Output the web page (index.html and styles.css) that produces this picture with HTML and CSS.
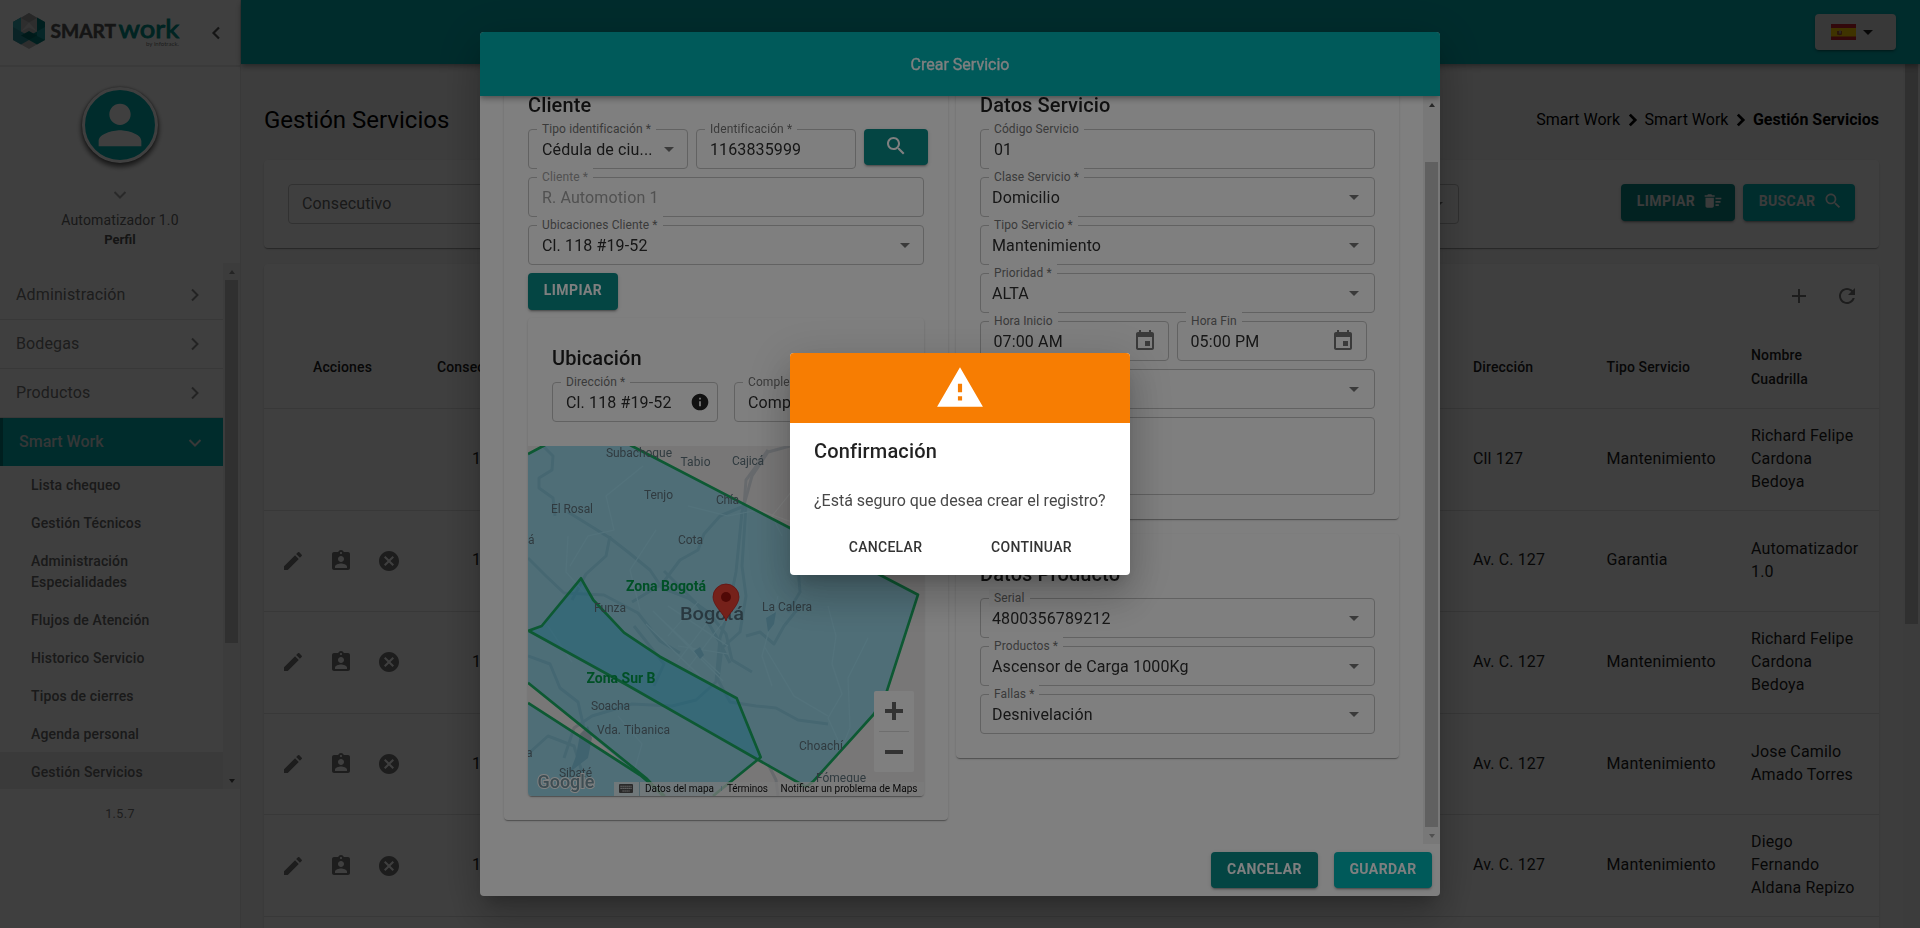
FILE: index.html
```html
<!DOCTYPE html>
<html lang="es">
<head>
<meta charset="utf-8">
<title>Smart Work - Gestión Servicios</title>
<link rel="stylesheet" href="styles.css">
</head>
<body>
<svg class="defs" aria-hidden="true">
  <symbol id="search" viewBox="0 0 24 24"><path d="M15.5 14h-.79l-.28-.27C15.41 12.59 16 11.11 16 9.5 16 5.91 13.09 3 9.5 3S3 5.91 3 9.5 5.91 16 9.5 16c1.61 0 3.09-.59 4.23-1.57l.27.28v.79l5 4.99L20.49 19l-4.99-5zm-6 0C7.01 14 5 11.99 5 9.5S7.01 5 9.5 5 14 7.01 14 9.5 11.99 14 9.5 14z"/></symbol>
  <symbol id="edit" viewBox="0 0 24 24"><path d="M3 17.25V21h3.75L17.81 9.94l-3.75-3.75L3 17.25zM20.71 7.04c.39-.39.39-1.02 0-1.41l-2.34-2.34c-.39-.39-1.02-.39-1.41 0l-1.83 1.83 3.75 3.75 1.83-1.83z"/></symbol>
  <symbol id="assign" viewBox="0 0 24 24"><path d="M19 3h-4.18C14.4 1.84 13.3 1 12 1c-1.3 0-2.4.84-2.82 2H5c-1.1 0-2 .9-2 2v14c0 1.1.9 2 2 2h14c1.1 0 2-.9 2-2V5c0-1.1-.9-2-2-2zm-7 0c.55 0 1 .45 1 1s-.45 1-1 1-1-.45-1-1 .45-1 1-1zm0 4c1.66 0 3 1.34 3 3s-1.34 3-3 3-3-1.34-3-3 1.34-3 3-3zm6 12H6v-1.4c0-2 4-3.1 6-3.1s6 1.1 6 3.1V19z"/></symbol>
  <symbol id="cancel" viewBox="0 0 24 24"><path d="M12 2C6.47 2 2 6.47 2 12s4.47 10 10 10 10-4.47 10-10S17.53 2 12 2zm5 13.59L15.59 17 12 13.41 8.41 17 7 15.59 10.59 12 7 8.41 8.41 7 12 10.59 15.59 7 17 8.41 13.41 12 17 15.59z"/></symbol>
  <symbol id="caret" viewBox="0 0 24 24"><path d="M7 10l5 5 5-5z"/></symbol>
  <symbol id="event" viewBox="0 0 24 24"><path d="M17 12h-5v5h5v-5zM16 1v2H8V1H6v2H5c-1.11 0-1.99.9-1.99 2L3 19c0 1.1.89 2 2 2h14c1.1 0 2-.9 2-2V5c0-1.1-.9-2-2-2h-1V1h-2zm3 18H5V8h14v11z"/></symbol>
  <symbol id="right" viewBox="0 0 24 24"><path d="M9 6.500l5.500 5.500-5.500 5.500" fill="none" stroke="currentColor"/></symbol>
  <symbol id="down" viewBox="0 0 24 24"><path d="M6.500 9l5.500 5.500 5.500-5.500" fill="none" stroke="currentColor"/></symbol>
</svg>

<div class="app">
  <aside class="sidebar">
    <div class="brand">
      <svg class="logo" viewBox="0 0 180 40">
        <g transform="translate(13 3)">
          <path d="M16 0l16 9v18l-16 9L0 27V9z" fill="#b9b9bb"/>
          <path d="M0 9l8-4.500v14l8 4.500v4l-8 4.500L0 27z" fill="#2b8f98"/>
          <path d="M0 9l8-4.500v14L0 14z" fill="#35a9b2"/>
          <path d="M32 9l-8-4.500v14L16 23v4l8 4.500 8-4.500z" fill="#007f7c"/>
          <path d="M24 18.500l8-4.500v13l-8-4z" fill="#1b9aa0"/>
          <path d="M8 5l8 4.500L24 5l-8-5z" fill="#9c9c9e"/>
          <path d="M8 18.500l8-9 8 9-8-4z" fill="#d0d0d2"/>
          <path d="M8 22.500l8-4.500 8 4.500-8 4.500z" fill="#006b69"/>
        </g>
        <text class="logo-a" x="50.500" y="28" textLength="65.500" lengthAdjust="spacingAndGlyphs">SMART</text>
        <text class="logo-b" x="118.500" y="28" textLength="60.500" lengthAdjust="spacingAndGlyphs">work</text>
        <text class="logo-c" x="146" y="35.500" textLength="33" lengthAdjust="spacingAndGlyphs">by infotrack.</text>
      </svg>
      <svg class="brand-arrow" viewBox="0 0 24 24"><path d="M15 6.500L9.500 12l5.500 5.500" fill="none" stroke="currentColor" stroke-width="2.200"/></svg>
    </div>
    <div class="profile">
      <div class="avatar"><svg viewBox="0 0 24 24"><path d="M12 12c2.210 0 4-1.790 4-4s-1.790-4-4-4-4 1.790-4 4 1.790 4 4 4zm0 2c-2.670 0-8 1.340-8 4v2h16v-2c0-2.660-5.330-4-8-4z"/></svg></div>
      <svg class="profile-arrow"><use href="#down"/></svg>
      <div class="profile-name">Automatizador 1.0</div>
      <div class="profile-role">Perfil</div>
    </div>
    <div class="menu">
      <nav class="menu-list">
        <div class="item">Administración<svg><use href="#right"/></svg></div>
        <div class="item">Bodegas<svg><use href="#right"/></svg></div>
        <div class="item">Productos<svg><use href="#right"/></svg></div>
        <div class="item open">Smart Work<svg><use href="#down"/></svg></div>
        <div class="sub">Lista chequeo</div>
        <div class="sub">Gestión Técnicos</div>
        <div class="sub">Administración Especialidades</div>
        <div class="sub">Flujos de Atención</div>
        <div class="sub">Historico Servicio</div>
        <div class="sub">Tipos de cierres</div>
        <div class="sub">Agenda personal</div>
        <div class="sub current">Gestión Servicios</div>
      </nav>
      <div class="bar"><i class="up off"></i><div class="thumb menu-thumb"></div><i class="dn"></i></div>
    </div>
    <div class="version">1.5.7</div>
  </aside>

  <div class="main">
    <header class="topbar">
      <div class="lang">
        <svg class="flag" viewBox="0 0 25 16"><path fill="#c8202c" d="M0 0h25v16H0z"/><path fill="#fc0" d="M0 4h25v8.500H0z"/><path fill="#ad5a2c" d="M6 7h5v3.500q-2.500 1.500-5 0z"/><path fill="#b9a08f" d="M8 6.500h2v3H8z"/></svg>
        <svg class="lang-caret"><use href="#caret"/></svg>
      </div>
    </header>
    <div class="scroll">
      <div class="page">
        <div class="page-head">
          <h1>Gestión Servicios</h1>
          <div class="crumbs"><span>Smart Work</span><svg><use href="#right"/></svg><span>Smart Work</span><svg><use href="#right"/></svg><b>Gestión Servicios</b></div>
        </div>
        <section class="card filters">
          <div class="filter-field">Consecutivo</div>
          <div class="filter-select"><svg class="ic"><use href="#caret"/></svg></div>
          <div class="actions">
            <button class="btn dark f-clear">LIMPIAR<svg viewBox="0 0 24 24"><path d="M15 16h4v2h-4zm0-8h7v2h-7zm0 4h6v2h-6zM3 18c0 1.100.900 2 2 2h6c1.100 0 2-.900 2-2V8H3v10zM14 5h-3l-1-1H6L5 5H2v2h12z"/></svg></button>
            <button class="btn teal f-find">BUSCAR<svg><use href="#search"/></svg></button>
          </div>
        </section>
        <section class="card grid-card">
          <div class="tools">
            <svg viewBox="0 0 24 24"><path d="M19 13h-6v6h-2v-6H5v-2h6V5h2v6h6v2z"/></svg>
            <svg viewBox="0 0 24 24"><path d="M17.650 6.350C16.200 4.900 14.210 4 12 4c-4.420 0-7.990 3.580-7.990 8s3.570 8 7.990 8c3.730 0 6.840-2.550 7.730-6h-2.080c-.820 2.330-3.040 4-5.650 4-3.310 0-6-2.690-6-6s2.690-6 6-6c1.660 0 3.140.690 4.220 1.780L13 11h7V4l-2.350 2.350z"/></svg>
          </div>
          <div class="row head"><div>Acciones</div><div>Consecutivo</div><div>Dirección</div><div>Tipo Servicio</div><div>Nombre<br>Cuadrilla</div></div>
          <div class="row"><div></div><div>1</div><div>Cll 127</div><div>Mantenimiento</div><div>Richard Felipe Cardona Bedoya</div></div>
          <div class="row"><div class="icons"><svg><use href="#edit"/></svg><svg><use href="#assign"/></svg><svg><use href="#cancel"/></svg></div><div>1</div><div>Av. C. 127</div><div>Garantia</div><div>Automatizador 1.0</div></div>
          <div class="row"><div class="icons"><svg><use href="#edit"/></svg><svg><use href="#assign"/></svg><svg><use href="#cancel"/></svg></div><div>1</div><div>Av. C. 127</div><div>Mantenimiento</div><div>Richard Felipe Cardona Bedoya</div></div>
          <div class="row"><div class="icons"><svg><use href="#edit"/></svg><svg><use href="#assign"/></svg><svg><use href="#cancel"/></svg></div><div>1</div><div>Av. C. 127</div><div>Mantenimiento</div><div>Jose Camilo Amado Torres</div></div>
          <div class="row"><div class="icons"><svg><use href="#edit"/></svg><svg><use href="#assign"/></svg><svg><use href="#cancel"/></svg></div><div>1</div><div>Av. C. 127</div><div>Mantenimiento</div><div>Diego Fernando Aldana Repizo</div></div>
          <div class="row"></div>
        </section>
      </div>
      <div class="bar page-bar"><div class="thumb page-thumb"></div></div>
    </div>
  </div>
</div>

<div class="backdrop">
  <div class="dialog">
    <div class="dialog-title">Crear Servicio</div>
    <div class="dialog-body">
      <div class="columns">
        <section class="card col-left">
          <h2>Cliente</h2>
          <div class="line">
            <div class="field w160"><label>Tipo identificación *</label><span>Cédula de ciu...</span><svg class="ic"><use href="#caret"/></svg></div>
            <div class="field w160"><label>Identificación *</label><span>1163835999</span></div>
            <button class="btn dark b-find"><svg><use href="#search"/></svg></button>
          </div>
          <div class="field disabled"><label>Cliente *</label><span>R. Automotion 1</span></div>
          <div class="field"><label>Ubicaciones Cliente *</label><span>Cl. 118 #19-52</span><svg class="ic"><use href="#caret"/></svg></div>
          <button class="btn dark b-clear">LIMPIAR</button>
          <div class="card place">
            <div class="place-form">
              <h2>Ubicación</h2>
              <div class="line wide">
                <div class="field w166"><label>Dirección *</label><span>Cl. 118 #19-52</span><svg class="info" viewBox="0 0 24 24"><path d="M12 2C6.480 2 2 6.480 2 12s4.480 10 10 10 10-4.480 10-10S17.520 2 12 2zm1 15h-2v-6h2v6zm0-8h-2V7h2v2z"/></svg></div>
                <div class="field w166"><label>Complemento</label><span>Complemento</span></div>
              </div>
            </div>
            <svg class="map" viewBox="0 0 396 350">
              <rect width="396" height="350" fill="#f1efef"/>
              <g fill="none" stroke="#cfd4da" stroke-width="3" stroke-linejoin="round">
                <path d="M15 0l10 10-1 14-13 8 0 10 14 10 2 18"/>
                <path d="M40 66l42 26 18 14 22 18 12 18 26 10 20 14 18 22 6 26 20 12"/>
                <path d="M0 112l18 18 18 17 40 2 34 18 22 28 20 12"/>
                <path d="M82 90l-4 20-20 18-14 26"/>
                <path d="M262 0l-22 6-16 24-10 36-6 60-8 40-8 26-4 44-20 18-24 6-40-2-40 12-18 12-10 30"/>
                <path d="M240 4l-22 30-2 26-24 10-16 18-6 16-18 10-18 24-30 18"/>
                <path d="M218 60l-4 60 4 30-6 36-18 16-4 32 12 22 26 4 20 2 22 12 30 4"/>
                <path d="M136 125l34 34 22 38 10 20M106 180l30 38-10 22"/>
                <path d="M218 190l14-4 14 12 10-18 16-20M270 120l2 26-12 20"/>
                <path d="M0 210l22 8 10 24 18 14 6 26M0 308l20-18 26 10 8 26M250 350l-2-16-8-16"/>
              </g>
              <g fill="none" stroke="#fdfdfd" stroke-width="1.100">
                <path d="M115 20L78 50 86 84 60 90 42 120M40 90l-2 36 18 20M128 84l-26 40 10 40M160 60l40 10 30-6 34 12M300 160l8 30-4 28 10 30-14 24 10 22M340 192l-20 40 2 50-12 30M268 40l-24 30 10 20M125 165l70 70M118 178l60 58M132 172l60 56M140 160l60 40M140 190l30-34M150 200l50 8M150 215l38-50M160 222l38-50M236 200l30 50 34 20M90 270l24 28-8 28M20 180l24 36M250 150l-16 60 10 30"/>
              </g>
              <path d="M52 288l8-8 4 12-4 20-18 14 6-16zM238 172l10-6-2 12-6 8zM166 205l6-4 4 8-4 4z" fill="#b9c6d1"/>
              <path d="M0 8L17-1h85l160 83 128 66.700-31.300 97L346 268l-61 67.700L278 341l-49.300-28L99 239 1 185H0z" fill="#36c7ef" fill-opacity=".44"/>
              <path d="M0 185l13.700-5L53 132.300 65.300 154 96 186.700l36 24 76.700 41.600 24 59L185 350h-50L0 236.700z" fill="#36c7ef" fill-opacity=".46"/>
              <path d="M0 257l110 72 25 21H0z" fill="#36c7ef" fill-opacity=".44"/>
              <g fill="none" stroke="#1bb266" stroke-width="2.700" stroke-linejoin="round">
                <path d="M0 8L17-1M102-1l160 83 128 66.700-31.300 97L346 268l-61 67.700L278 341l-49.300-28L99 239 1 185"/>
                <path d="M0 185l13.700-5L53 132.300 65.300 154 96 186.700l36 24 76.700 41.600 24 59L185 350M135 350L118 332 0 236.700"/>
                <path d="M0 257l112 72 25 21"/>
              </g>
              <g class="places">
                <text x="78" y="10.700" textLength="66">Subachoque</text><text x="152.500" y="20" textLength="30">Tabio</text><text x="204" y="19" textLength="32">Cajicá</text>
                <text x="116" y="53" textLength="29">Tenjo</text><text x="188" y="58" textLength="23">Chía</text><text x="23" y="67" textLength="42">El Rosal</text>
                <text x="0" y="98">á</text><text x="150" y="98" textLength="25">Cota</text><text x="66" y="166" textLength="32">Funza</text><text x="234" y="165" textLength="50">La Calera</text>
                <text x="63" y="264" textLength="39">Soacha</text><text x="69" y="288" textLength="73">Vda. Tibanica</text><text x="271" y="304" textLength="44">Choachí</text>
                <text x="31" y="331" textLength="33">Sibaté</text><text x="288" y="336" textLength="50">Fómeque</text><text x="-2" y="311">a</text>
              </g>
              <text class="city" x="152" y="174" textLength="64" lengthAdjust="spacingAndGlyphs">Bogotá</text>
              <text class="zone" x="98" y="145" textLength="80">Zona Bogotá</text>
              <text class="zone" x="58.500" y="237" textLength="69">Zona Sur B</text>
              <path d="M198 175c-1.500-7-13-15-13-24a13 13 0 0 1 26 0c0 9-11.500 17-13 24z" fill="#ea4335" stroke="#c5221f" stroke-width=".8"/>
              <circle cx="198" cy="151" r="5" fill="#a0120c"/>
              <text class="google" x="9.500" y="342" textLength="57" lengthAdjust="spacingAndGlyphs">Google</text>
              <path d="M86 336h310v14H86z" fill="#f5f5f5" fill-opacity=".75"/>
              <path d="M111.500 336v14M193.500 340v5" stroke="#8fc4d4" stroke-width=".8"/>
              <rect x="91" y="338" width="14" height="9" rx="1" fill="#555"/>
              <path d="M92.500 340.200h11M92.500 342.400h11M94.500 345h7" stroke="#eee" stroke-width="1.100" stroke-dasharray="1.200 .8"/>
              <g class="legal"><text x="117" y="346" textLength="69">Datos del mapa</text><text x="199" y="346" textLength="41">Términos</text><text x="252.500" y="346" textLength="137">Notificar un problema de Maps</text></g>
              <rect x="346" y="245" width="40" height="81" rx="2" fill="#fff"/>
              <path d="M351 285.500h30" stroke="#ddd" stroke-width="1"/>
              <path d="M357 265h18M366 256v18M357 306h18" stroke="#666" stroke-width="4"/>
            </svg>
          </div>
        </section>
        <div class="col-right">
          <section class="card service">
            <h2>Datos Servicio</h2>
            <div class="field"><label>Código Servicio</label><span>01</span></div>
            <div class="field auto"><label>Clase Servicio *</label><span>Domicilio</span><svg class="ic"><use href="#caret"/></svg></div>
            <div class="field auto"><label>Tipo Servicio *</label><span>Mantenimiento</span><svg class="ic"><use href="#caret"/></svg></div>
            <div class="field auto"><label>Prioridad *</label><span>ALTA</span><svg class="ic"><use href="#caret"/></svg></div>
            <div class="line">
              <div class="field w189"><label>Hora Inicio</label><span>07:00 AM</span><svg class="cal"><use href="#event"/></svg></div>
              <div class="field w190"><label>Hora Fin</label><span>05:00 PM</span><svg class="cal"><use href="#event"/></svg></div>
            </div>
            <div class="field auto"><span></span><svg class="ic"><use href="#caret"/></svg></div>
            <div class="field area"></div>
          </section>
          <section class="card product">
            <h2>Datos Producto</h2>
            <div class="field auto"><label>Serial</label><span>4800356789212</span><svg class="ic"><use href="#caret"/></svg></div>
            <div class="field auto"><label>Productos *</label><span>Ascensor de Carga 1000Kg</span><svg class="ic"><use href="#caret"/></svg></div>
            <div class="field auto"><label>Fallas *</label><span>Desnivelación</span><svg class="ic"><use href="#caret"/></svg></div>
          </section>
        </div>
      </div>
      <div class="bar"><i class="up"></i><div class="thumb dialog-thumb"></div><i class="dn off"></i></div>
    </div>
    <div class="dialog-actions">
      <button class="btn dark b-cancel">CANCELAR</button>
      <button class="btn teal b-save">GUARDAR</button>
    </div>
  </div>
</div>

<div class="backdrop">
  <div class="confirm">
    <div class="confirm-top"><svg viewBox="0 0 24 24"><path d="M1 21h22L12 2 1 21zm12-3h-2v-2h2v2zm0-4h-2v-4h2v4z"/></svg></div>
    <h2>Confirmación</h2>
    <p>¿Está seguro que desea crear el registro?</p>
    <div class="confirm-actions"><button>CANCELAR</button><button>CONTINUAR</button></div>
  </div>
</div>
</body>
</html>
```

FILE: styles.css
```css
* { box-sizing: border-box; }
body { margin: 0; height: 928px; overflow: hidden; font: 16px/1.43 Roboto, "Liberation Sans", sans-serif; letter-spacing: .13px; color: rgba(0,0,0,.87); }
h1, h2, p { margin: 0; }
svg { display: block; fill: currentColor; flex: none; stroke-width: 2; }
button { border: 0; background: none; padding: 0; margin: 0; font-family: inherit; }
.defs { position: absolute; width: 0; height: 0; }
.app { display: flex; height: 928px; }

/* sidebar */
.sidebar { width: 241px; flex: none; background: #fff; border-right: 1px solid #e6e6e6; display: flex; flex-direction: column; }
.brand { height: 67px; border-bottom: 2px solid #eaeaea; display: flex; align-items: center; }
.logo { width: 180px; height: 40px; margin-top: -5px; }
.logo-a { font: 700 18.5px Lato, sans-serif; fill: #555; stroke: #555; stroke-width: .5px; letter-spacing: 0; }
.logo-b { font: 400 25px Lato, sans-serif; fill: #009089; stroke: #009089; stroke-width: .9px; letter-spacing: 0; }
.logo-c { font: 6.5px Lato, sans-serif; fill: #777; letter-spacing: 0; }
.brand-arrow { width: 24px; height: 24px; margin-left: 24px; color: #555; }
.profile { height: 196px; display: flex; flex-direction: column; align-items: center; padding-top: 20px; color: #666; }
.avatar { width: 76px; height: 76px; border: 3px solid #fff; border-radius: 50%; background: #00b3b3; color: #fff; box-shadow: 0 3px 5px 1px rgba(0,0,0,.6), 0 0 2px rgba(0,0,0,.4); display: grid; place-items: center; flex: none; }
.avatar svg { width: 64px; height: 64px; }
.profile-arrow { width: 24px; height: 24px; margin-top: 20px; color: #a5a5a5; }
.profile-name { font-size: 14px; line-height: 20px; margin-top: 3px; letter-spacing: .13px; }
.profile-role { font-size: 13px; line-height: 18px; font-weight: 700; color: #555; margin-top: 1px; letter-spacing: 0; }
.menu { height: 526px; display: flex; flex: none; overflow: hidden; }
.menu-list { width: 223px; padding-top: 8px; }
.item { height: 49px; border-bottom: 1px solid #e0e0e0; padding: 1px 16px 0; display: flex; align-items: center; justify-content: space-between; color: #757575; }
.item svg { width: 24px; height: 24px; color: #8d8d8d; margin-top: -1px; }
.item.open { height: 48px; border: 0; border-left: 3px solid #007c7c; background: #00b1b2; color: #d5dcdc; font-weight: 500; margin-bottom: 1px; letter-spacing: 0; }
.item.open svg { color: #e0e0e0; margin-top: 0; }
.sub { padding: 7.5px 60px 9.5px 31px; font-size: 14px; line-height: 21px; font-weight: 500; color: #686868; letter-spacing: .15px; }
.sub.current { background: #eaeaea; padding-bottom: 16px; margin-top: -2px; padding-top: 10px; }
.version { text-align: center; font-size: 12.5px; color: #777; margin-top: 16px; letter-spacing: .4px; }

/* scrollbars */
.bar { width: 17px; flex: none; background: #f1f1f1; display: flex; flex-direction: column; align-items: center; margin-left: auto; }
.bar i { width: 17px; height: 17px; flex: none; display: grid; place-items: center; }
.bar i::before { content: ""; border: 3.5px solid transparent; }
.bar .up::before { border-bottom: 4px solid #505050; border-top: 0; }
.bar .dn { margin-top: auto; }
.bar .dn::before { border-top: 4px solid #505050; border-bottom: 0; }
.bar .up.off::before { border-bottom-color: #909090; }
.bar .dn.off::before { border-top-color: #a0a0a0; }
.thumb { width: 13px; background: #c1c1c1; flex: none; }
.menu-thumb { height: 363px; }
.page-thumb { height: 560px; }
.dialog-thumb { height: 665px; margin-top: 49px; }

/* page */
.main { flex: 1; min-width: 0; background: #f7f7f7; display: flex; flex-direction: column; }
.topbar { height: 64px; flex: none; background: #00b1b2; box-shadow: 0 2px 4px -1px rgba(0,0,0,.2), 0 4px 5px rgba(0,0,0,.14), 0 1px 10px rgba(0,0,0,.12); position: relative; display: flex; justify-content: flex-end; padding: 14px 24px; }
.lang { width: 81px; height: 36px; border-radius: 4px; background: #e3e3e3; box-shadow: 0 3px 1px -2px rgba(0,0,0,.2), 0 2px 2px rgba(0,0,0,.14), 0 1px 5px rgba(0,0,0,.12); display: flex; align-items: center; padding-left: 16px; }
.flag { width: 25px; height: 16px; }
.lang-caret { width: 24px; height: 24px; }
.scroll { flex: 1; display: flex; min-height: 0; overflow: hidden; }
.page { width: 1662px; padding: 0 24px 0 23px; flex: none; }
.page-bar { background: #f1f1f1; }
.page-head { height: 96px; display: flex; justify-content: space-between; align-items: center; padding-top: 15px; color: #000; }
h1 { font-size: 24px; font-weight: 400; letter-spacing: 0; line-height: 32px; }
.crumbs { display: flex; align-items: center; letter-spacing: 0; padding-top: 1px; }
.crumbs svg { width: 24.5px; height: 24px; stroke-width: 2.8; margin-top: -1px; padding-left: 1px; }
.crumbs b { font-weight: 700; }
.card { background: #fff; border-radius: 4px; min-width: 0; box-shadow: 0 2px 1px -1px rgba(0,0,0,.2), 0 1px 1px rgba(0,0,0,.14), 0 1px 3px rgba(0,0,0,.12); }
.filters { height: 88px; padding: 24px; display: flex; }
.filter-field, .filter-select { height: 40px; border: 1px solid #c4c4c4; border-radius: 4px; padding: 0 13px; line-height: 38px; color: #666; }
.filter-field { width: 380px; }
.filter-select { width: 380px; margin-left: 411px; display: flex; align-items: center; justify-content: flex-end; padding: 0 8px; }
.actions { display: flex; gap: 8px; margin-left: auto; }
.btn { border-radius: 4px; color: #fff; font-weight: 700; font-size: 14px; line-height: 34px; letter-spacing: .4px; height: 37px; display: flex; align-items: center; justify-content: center; padding: 0 0 3px; box-shadow: 0 3px 1px -2px rgba(0,0,0,.2), 0 2px 2px rgba(0,0,0,.14), 0 1px 5px rgba(0,0,0,.12); }
.btn svg { width: 20px; height: 20px; margin-left: 8px; }
.dark { background: #088a87; }
.teal { background: #00b4b5; }
.filters .btn { color: #eee; padding-left: 4px; }
.f-clear { width: 114px; }
.f-find { width: 112px; }
.grid-card { margin-top: 16px; height: 700px; overflow: hidden; }
.tools { height: 64px; display: flex; justify-content: flex-end; gap: 24px; padding: 20px 20px; color: #757575; }
.tools svg { width: 24px; height: 24px; }
.row { display: grid; grid-template-columns: 157px 1036px 133.5px 144.5px 144px; height: 101.6px; border-bottom: 1px solid #e0e0e0; align-items: center; font-size: 16px; line-height: 22.88px; letter-spacing: .14px; color: #1c1c1c; }
.row > div { padding: 0 16px; }
.row > div:nth-child(2) { padding-left: 51px; }
.row.head { height: 81px; font-size: 14px; line-height: 24px; font-weight: 500; padding-bottom: 2px; }
.row.head > div:first-child { text-align: center; }
.row.head > div:nth-child(2) { padding-left: 16px; }
.row > .icons { display: flex; gap: 24px; padding-left: 17px; color: #757575; }
.icons svg { width: 24px; height: 24px; }

/* dialogs */
.backdrop { position: fixed; inset: 0; background: rgba(0,0,0,.5); display: flex; align-items: center; justify-content: center; }
.dialog, .confirm { background: #fff; border-radius: 4px; overflow: hidden; box-shadow: 0 11px 15px -7px rgba(0,0,0,.2), 0 24px 38px 3px rgba(0,0,0,.14), 0 9px 46px 8px rgba(0,0,0,.12); }
.dialog { width: 960px; height: 864px; display: flex; flex-direction: column; }
.dialog-title { height: 64px; flex: none; background: #00b4b5; color: #fff; text-align: center; line-height: 65px; letter-spacing: 0; -webkit-text-stroke: .3px #fff; position: relative; box-shadow: 0 2px 4px -1px rgba(0,0,0,.2), 0 4px 5px rgba(0,0,0,.14), 0 1px 10px rgba(0,0,0,.12); }
.dialog-body { height: 748px; flex: none; display: flex; overflow: hidden; }
.columns { display: grid; grid-template-columns: 444px 443px; gap: 8px; margin-left: 24px; align-items: start; margin-top: -31px; height: 780px; }
.col-left { padding: 24px 24px; height: 755px; }
.col-right { display: flex; flex-direction: column; gap: 15px; }
.service { padding: 24px; height: 454px; }
.product { padding: 24px; height: 224px; }
h2 { font-size: 20px; line-height: 32px; font-weight: 500; letter-spacing: .12px; margin-bottom: 8px; }
.field { position: relative; height: 40px; border: 1px solid #c4c4c4; border-radius: 4px; display: flex; align-items: center; justify-content: space-between; padding: 0 6px 0 13px; margin-bottom: 8px; color: #2e2e2e; flex: none; }
.field span { padding-top: 2px; white-space: nowrap; }
.field label { position: absolute; left: 8px; top: -10px; padding: 0 5px; background: #fff; font-size: 12px; line-height: 18px; color: #757575; letter-spacing: .1px; white-space: nowrap; }
.field.auto { padding-left: 11px; }
.auto .ic { margin-right: 2px; }
.field.disabled { color: #a2a2a2; }
.disabled label { color: #a2a2a2; }
.ic { width: 24px; height: 24px; color: #757575; }
.cal { width: 24px; height: 24px; margin-right: 5px; color: #757575; }
.info { width: 20px; height: 20px; color: #222; margin-right: 1px; }
.line { display: flex; gap: 8px; }
.line.wide { gap: 16px; }
.w160 { width: 160px; } .w166 { width: 166px; } .w189 { width: 189px; } .w190 { width: 190px; }
.w189, .w190 { padding-left: 12.5px; }
.field.area { height: 78px; margin: 0; }
.b-find { width: 64px; height: 36px; flex: none; }
.b-find svg { width: 24px; height: 24px; margin: 0 0 0 -1px; }
.b-clear { width: 90px; margin-bottom: 8px; }
.place { height: 478px; overflow: hidden; }
.place-form { height: 128px; padding: 24px 24px 0; }
.map { width: 396px; height: 350px; }
.map text { letter-spacing: 0; }
.places { font-size: 12px; fill: #60757f; }
.city { font-size: 19px; font-weight: 500; fill: #52707f; }
.zone { font-size: 14px; font-weight: 700; fill: #00a04c; }
.google { font: 500 18px Roboto, sans-serif; fill: #7a9aa6; stroke: #fff; stroke-width: 2px; paint-order: stroke; }
.legal { font-size: 10px; fill: #111; }
.dialog-actions { display: flex; justify-content: flex-end; gap: 16px; padding: 8px; }
.dialog-actions .btn { height: 36px; }
.b-cancel { width: 107px; } .b-save { width: 98px; }

.confirm { width: 340px; height: 222px; }
.confirm-top { height: 70px; background: #f77d02; display: flex; justify-content: center; padding-top: 10px; color: #fff; }
.confirm-top svg { width: 50px; height: 50px; }
.confirm h2 { padding: 12px 24px 0; margin: 0; letter-spacing: .17px; }
.confirm p { padding: 22px 24px 0; line-height: 24px; color: #484848; white-space: nowrap; letter-spacing: 0; }
.confirm-actions { display: grid; grid-template-columns: 1fr 1fr; padding: 16px 24px 0; }
.confirm-actions button { font-size: 14px; font-weight: 500; line-height: 36px; letter-spacing: .3px; color: #333; padding-right: 3px; }
```
